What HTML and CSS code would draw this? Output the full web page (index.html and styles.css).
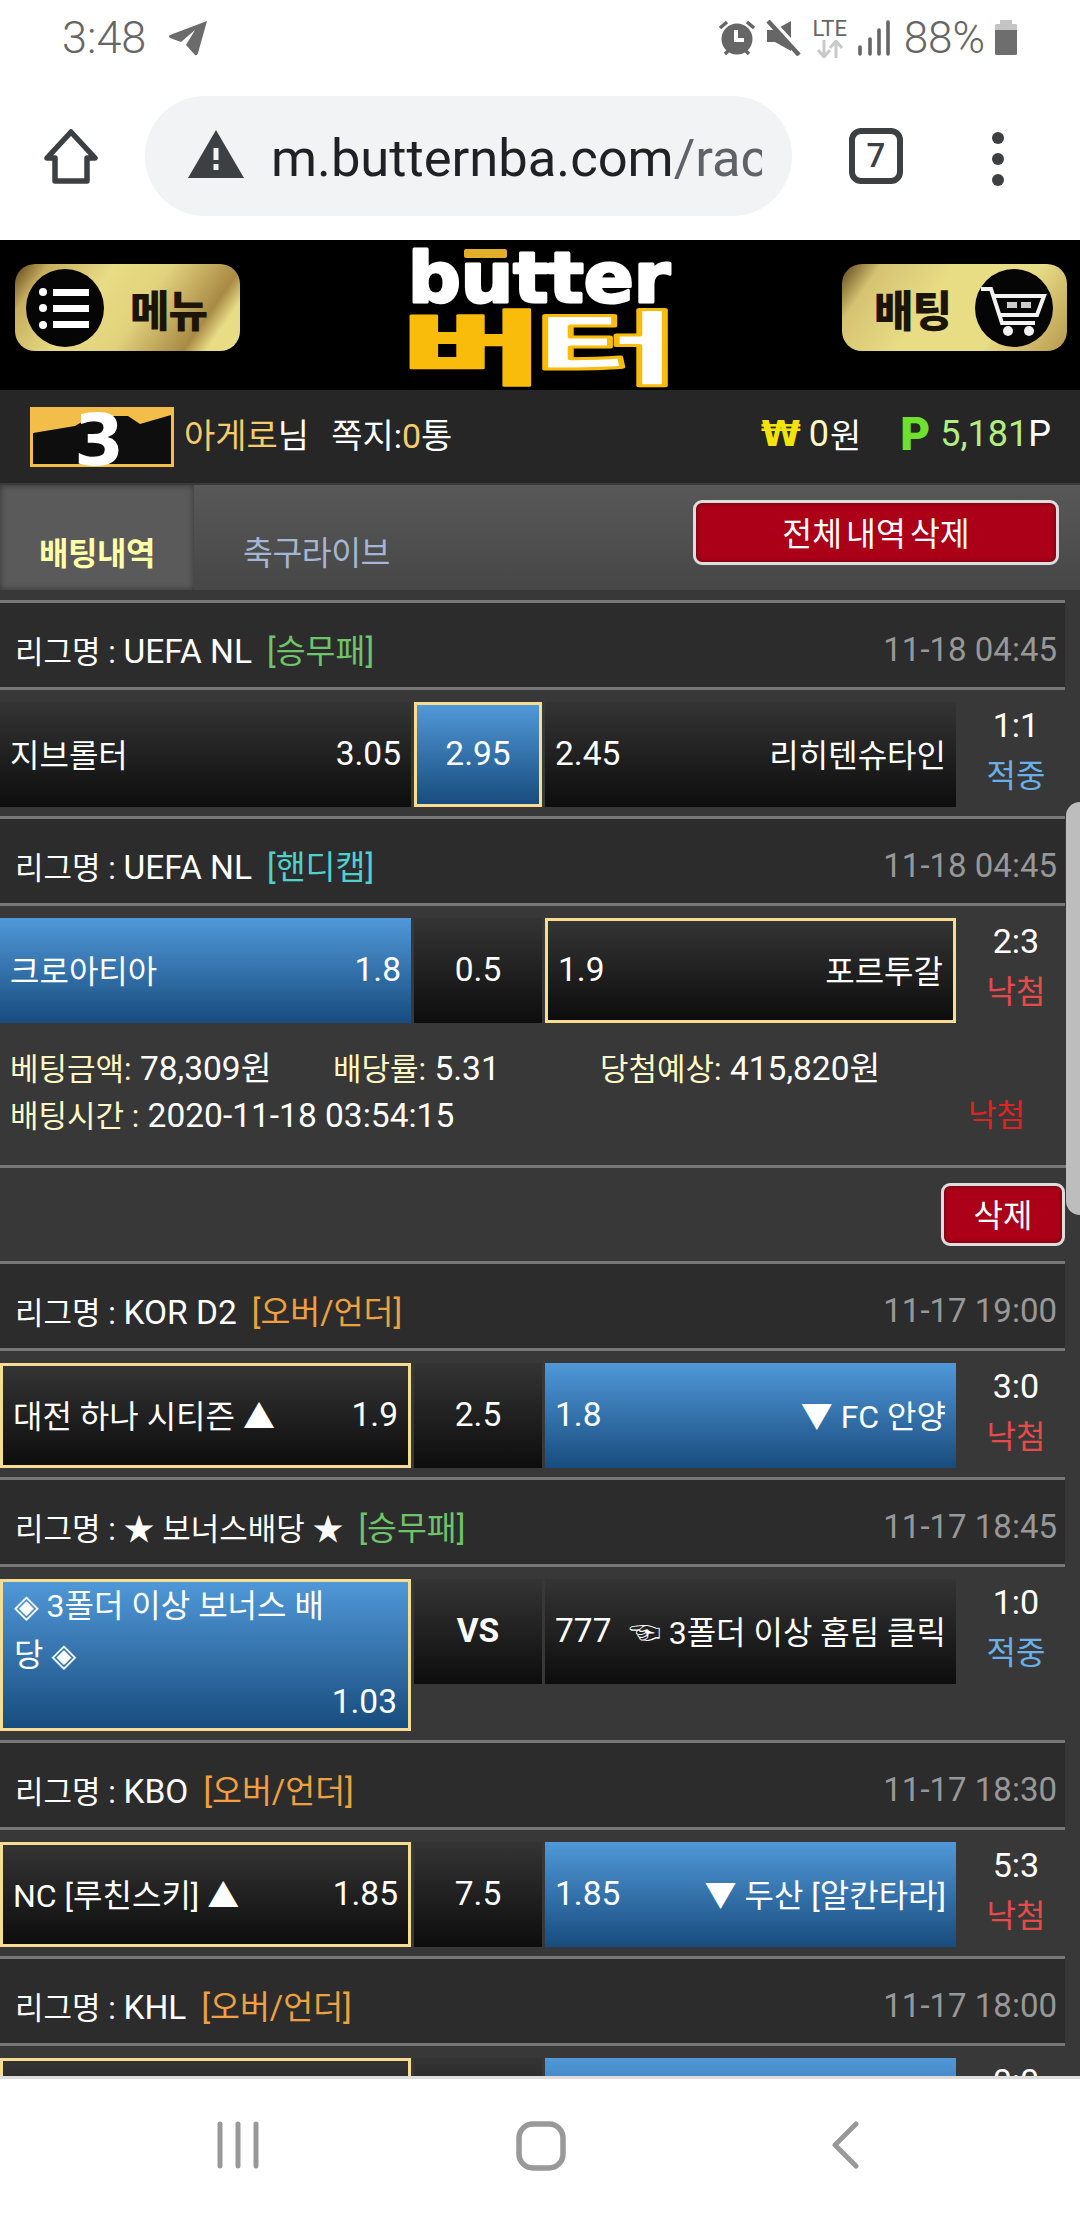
FILE: index.html
```html
<!DOCTYPE html>
<html lang="ko">
<head>
<meta charset="utf-8">
<title>butter</title>
<link rel="stylesheet" href="styles.css">
</head>
<body>
<div class="phone">
  <div class="statusbar">
    <div class="st-left">
      <span class="clock">3:48</span>
      <svg class="ic-send" width="40" height="36" viewBox="0 0 40 36"><path d="M39 1 L2 15 Q0 16 2 18 L13 22 L27 10 L18 25 L27 35 Q29 36 30 33 Z" fill="#6b6b6b"/></svg>
    </div>
    <div class="st-right">
      <svg width="40" height="38" viewBox="0 0 40 38"><circle cx="20" cy="20" r="15.500" fill="#666"/><path d="M19 11 V21 H27" fill="none" stroke="#fff" stroke-width="4"/><path d="M3 9 L10 3 M37 9 L30 3 M8 35 L12 31 M32 35 L28 31" stroke="#666" stroke-width="3.5"/></svg>
      <svg class="ic-mute" width="36" height="36" viewBox="0 0 36 36"><path d="M1 10 H9 L25 1 V31 L9 22 H1 Z" fill="#666"/><path d="M5 1 L35 33" stroke="#fff" stroke-width="6"/><path d="M2 1 L33 35" stroke="#666" stroke-width="4.500"/></svg>
      <div class="lte"><span class="lte-t">LTE</span><svg width="28" height="18" viewBox="0 0 28 18"><path d="M8 0 V16 M2 10 L8 17 L14 10" fill="none" stroke="#c9c9c9" stroke-width="3"/><path d="M20 18 V2 M14 8 L20 1 L26 8" fill="none" stroke="#c9c9c9" stroke-width="3"/></svg></div>
      <svg class="ic-sig" width="32" height="36" viewBox="0 0 32 36"><path d="M2 27 V34 M12 19 V34 M21 10 V34 M30 2 V34" stroke="#666" stroke-width="3.6" stroke-linecap="round"/></svg>
      <span class="batt">88%</span>
      <svg width="24" height="36" viewBox="0 0 24 36"><path d="M6 0 H18 V4 H6 Z M1 5 Q1 4 3 4 H21 Q23 4 23 5 V10 H1 Z" fill="#c4c4c4"/><path d="M1 10 H23 V34 Q23 35 21 35 H3 Q1 35 1 34 Z" fill="#6e6e6e"/></svg>
    </div>
  </div>

  <div class="urlbar">
    <svg class="ic-home" width="54" height="56" viewBox="0 0 54 56"><path d="M27 3 L51 29 H43 V52 H11 V29 H3 Z" fill="none" stroke="#3c4043" stroke-width="5.500" stroke-linejoin="round"/></svg>
    <div class="pill">
      <svg class="ic-warn" width="56" height="48" viewBox="0 0 56 48"><path d="M28 0 L56 48 H0 Z" fill="#3c4043"/><rect x="25.500" y="18" width="5" height="12" fill="#f1f3f4"/><rect x="25.500" y="34" width="5" height="6" fill="#f1f3f4"/></svg>
      <div class="url"><span class="url-host">m.butternba.com</span><span class="url-path">/race</span></div>
    </div>
    <div class="tabcount">7</div>
    <div class="kebab"><i></i><i></i><i></i></div>
  </div>

  <header class="sitehead">
    <div class="goldbtn goldbtn-l">
      <svg width="78" height="78" viewBox="0 0 78 78"><circle cx="39" cy="39" r="39" fill="#050505"/><g fill="#fff"><circle cx="17" cy="23" r="4"/><circle cx="17" cy="39" r="4"/><circle cx="17" cy="56" r="4"/><rect x="27" y="20" width="36" height="7"/><rect x="27" y="36" width="36" height="7"/><rect x="27" y="52" width="36" height="7"/></g></svg>
      <span class="goldtxt">메뉴</span>
    </div>
    <svg class="logo" width="262" height="136" viewBox="0 0 262 136">
      <rect class="logo-bar" x="55" y="0" width="43" height="9" rx="2"/>
      <text class="logo-en" x="-1" y="53" textLength="262" lengthAdjust="spacingAndGlyphs">butter</text>
      <text class="logo-ko" x="-8" y="128" textLength="142" lengthAdjust="spacingAndGlyphs">버</text>
      <text class="logo-ko logo-ko2" x="124" y="128" textLength="146" lengthAdjust="spacingAndGlyphs">터</text>
    </svg>
    <div class="goldbtn goldbtn-r">
      <span class="goldtxt">배팅</span>
      <svg width="78" height="78" viewBox="0 0 78 78"><circle cx="39" cy="39" r="39" fill="#050505"/><path d="M6 20 H16 L27 54 H60 M19 27 H69 L62 46 H25" fill="none" stroke="#f2f2f2" stroke-width="4"/><rect x="32" y="33" width="10" height="6" fill="#ccc"/><rect x="46" y="33" width="10" height="6" fill="#ccc"/><circle cx="33" cy="62" r="5" fill="#f2f2f2"/><circle cx="54" cy="62" r="5" fill="#f2f2f2"/></svg>
    </div>
  </header>

  <div class="userbar">
    <div class="user-l">
      <svg class="lvl" width="144" height="60" viewBox="0 0 144 60">
        <rect width="144" height="60" fill="#f3bd4a"/>
        <path d="M3 26 L45 19 L62 9 L98 9 L110 17 L141 8 V57 H3 Z" fill="#0e0e0e"/>
        <text class="lvl-n" x="69" y="58">3</text>
      </svg>
      <span class="gold name">아게로</span><span class="nim">님</span>
      <span class="msg">쪽지:<span class="gold">0</span>통</span>
    </div>
    <div class="user-r">
      <span class="won-ic">₩</span><span class="cream">0</span><span class="won">원</span>
      <span class="pt-ic">P</span><span class="lime">5,181</span><span>P</span>
    </div>
  </div>

  <div class="tabs">
    <div class="tab tab-on">배팅내역</div>
    <div class="tab tab-off">축구라이브</div>
    <button class="redbtn redbtn-all">전체 내역 삭제</button>
  </div>

  <main class="list">
    <div class="league"><div class="lg-l"><span>리그명 : <span class="lat">UEFA NL</span></span><span class="tag t-green">[승무패]</span></div><span class="date">11-18 04:45</span></div>
    <div class="bet">
      <div class="cell dark"><span>지브롤터</span><span class="num">3.05</span></div>
      <div class="cell mid blue sel">2.95</div>
      <div class="cell dark"><span class="num">2.45</span><span>리히텐슈타인</span></div>
      <div class="score">1:1<br><span class="hit">적중</span></div>
    </div>

    <div class="league"><div class="lg-l"><span>리그명 : <span class="lat">UEFA NL</span></span><span class="tag t-cyan">[핸디캡]</span></div><span class="date">11-18 04:45</span></div>
    <div class="bet bet-open">
      <div class="cell blue"><span>크로아티아</span><span class="num">1.8</span></div>
      <div class="cell mid dark">0.5</div>
      <div class="cell dark sel"><span class="num">1.9</span><span>포르투갈</span></div>
      <div class="score">2:3<br><span class="miss">낙첨</span></div>
    </div>
    <div class="detail">
      <div class="d-row">
        <span><span class="lbl">베팅금액:</span> 78,309원</span>
        <span><span class="lbl">배당률:</span> 5.31</span>
        <span><span class="lbl">당첨예상:</span> 415,820원</span>
      </div>
      <div class="d-row2">
        <span><span class="lbl">배팅시간 :</span> 2020-11-18 03:54:15</span>
        <span class="d-miss">낙첨</span>
      </div>
    </div>
    <div class="delrow"><button class="redbtn redbtn-one">삭제</button></div>

    <div class="league"><div class="lg-l"><span>리그명 : <span class="lat">KOR D2</span></span><span class="tag t-orange">[오버/언더]</span></div><span class="date">11-17 19:00</span></div>
    <div class="bet">
      <div class="cell dark sel"><span>대전 하나 시티즌 ▲</span><span class="num">1.9</span></div>
      <div class="cell mid dark">2.5</div>
      <div class="cell blue"><span class="num">1.8</span><span>▼ FC 안양</span></div>
      <div class="score">3:0<br><span class="miss">낙첨</span></div>
    </div>

    <div class="league"><div class="lg-l"><span>리그명 : ★ 보너스배당 ★</span><span class="tag t-green">[승무패]</span></div><span class="date">11-17 18:45</span></div>
    <div class="bet">
      <div class="cell blue sel cell-tall">
        <div class="tall-t">◈ 3폴더 이상 보너스 배당 ◈</div>
        <div class="tall-o">1.03</div>
      </div>
      <div class="cell mid dark vs">VS</div>
      <div class="cell dark"><span class="num">777</span><span>☜ 3폴더 이상 홈팀 클릭</span></div>
      <div class="score">1:0<br><span class="hit">적중</span></div>
    </div>

    <div class="league"><div class="lg-l"><span>리그명 : <span class="lat">KBO</span></span><span class="tag t-orange">[오버/언더]</span></div><span class="date">11-17 18:30</span></div>
    <div class="bet">
      <div class="cell dark sel"><span>NC [루친스키] ▲</span><span class="num">1.85</span></div>
      <div class="cell mid dark">7.5</div>
      <div class="cell blue"><span class="num">1.85</span><span>▼ 두산 [알칸타라]</span></div>
      <div class="score">5:3<br><span class="miss">낙첨</span></div>
    </div>

    <div class="league"><div class="lg-l"><span>리그명 : <span class="lat">KHL</span></span><span class="tag t-orange">[오버/언더]</span></div><span class="date">11-17 18:00</span></div>
    <div class="bet">
      <div class="cell dark sel"></div>
      <div class="cell mid dark"></div>
      <div class="cell blue"></div>
      <div class="score">0:0</div>
    </div>
    <div class="scrollthumb"></div>
  </main>

  <nav class="navbar">
    <svg width="44" height="48" viewBox="0 0 44 48"><path d="M4 3 V45 M22 3 V45 M40 3 V45" stroke="#999" stroke-width="5" stroke-linecap="round"/></svg>
    <svg width="50" height="50" viewBox="0 0 50 50"><rect x="3" y="3" width="44" height="44" rx="14" fill="none" stroke="#999" stroke-width="5.500"/></svg>
    <svg width="28" height="48" viewBox="0 0 28 48"><path d="M25 3 L4 24 L25 45" fill="none" stroke="#999" stroke-width="5" stroke-linecap="round" stroke-linejoin="round"/></svg>
  </nav>
</div>
</body>
</html>
```
FILE: styles.css
```css
* { box-sizing: border-box; }
html, body { margin: 0; padding: 0; }
body { font-family: Roboto, "Noto Sans CJK KR", "DejaVu Sans", sans-serif; background: #fff; }
.phone { width: 1080px; height: 2220px; display: flex; flex-direction: column; overflow: hidden; }

.statusbar { height: 80px; padding: 18px 62px 0 62px; display: flex; justify-content: space-between; align-items: flex-start; color: #666; flex: none; }
.st-left, .st-right { display: flex; align-items: center; height: 40px; }
.clock { font-size: 45px; font-weight: 300; line-height: 40px; }
.ic-send { margin-left: 22px; }
.ic-mute { margin-left: 9px; }
.lte { width: 38px; margin-left: 9px; display: flex; flex-direction: column; align-items: center; }
.lte-t { font-size: 22px; line-height: 20px; color: #666; }
.lte svg { display: block; margin-top: 1px; }
.ic-sig { margin-left: 9px; }
.batt { font-size: 44px; font-weight: 300; line-height: 40px; margin: 0 9px 0 14px; }

.urlbar { height: 160px; flex: none; display: flex; align-items: flex-start; padding-top: 16px; position: relative; }
.ic-home { margin: 33px 0 0 44px; }
.pill { width: 647px; height: 120px; margin-left: 47px; border-radius: 60px; background: #f1f3f4; display: flex; align-items: center; padding-left: 43px; }
.ic-warn { flex: none; margin-top: -4px; }
.url { width: 491px; margin-left: 27px; margin-top: 3px; overflow: hidden; white-space: nowrap; font-size: 52.5px; line-height: 64px; }
.url-host { color: #202124; }
.url-path { color: #5f6368; }
.tabcount { width: 54px; height: 56px; margin: 32px 0 0 57px; border: 6px solid #3c4043; border-radius: 12px; font-size: 33px; font-weight: 500; text-align: center; line-height: 43px; color: #3c4043; }
.kebab { margin: 36px 0 0 89px; display: flex; flex-direction: column; gap: 9px; }
.kebab i { display: block; width: 12px; height: 12px; border-radius: 50%; background: #3c4043; }

.sitehead { height: 150px; flex: none; background: #000; display: flex; align-items: flex-start; justify-content: space-between; padding: 24px 13px 0 15px; position: relative; }
.goldbtn { width: 225px; height: 87px; border-radius: 20px; display: flex; align-items: center; }
.goldbtn-l { background: linear-gradient(125deg, #5d4317 0, #c7ae60 12%, #e8dc85 35%, #e2d27d 55%, #a88a44 80%, #e8dc85 88%); padding-left: 11px; gap: 26px; }
.goldbtn-r { background: linear-gradient(125deg, #5d4317 0, #d6c372 14%, #e8dc85 40%, #e8dc85 70%, #b7994f 100%); padding-left: 32px; gap: 24px; }
.goldtxt { font-family: "Noto Sans CJK KR", sans-serif; font-size: 43px; font-weight: 900; color: #1a1508; letter-spacing: -1px; }
.logo { position: absolute; left: 409px; top: 9px; overflow: visible; }
.logo-bar { fill: #e0ae28; }
.logo-en { font-family: "DejaVu Sans", sans-serif; font-weight: 700; font-size: 70px; fill: #fff; stroke: #fff; stroke-width: 3px; stroke-linejoin: round; }
.logo-ko { font-family: "Noto Sans CJK KR", sans-serif; font-weight: 900; font-size: 80px; fill: #f9bc0a; stroke: #f9bc0a; stroke-width: 2px; stroke-linejoin: round; }
.logo-ko2 { fill: #fff; stroke-width: 3px; }

.userbar { height: 93px; flex: none; background: #262626; display: flex; justify-content: space-between; align-items: center; padding: 0 29px 0 30px; color: #fff; font-size: 34px; font-weight: 400; }
.user-l, .user-r { display: flex; align-items: center; }
.user-l > span { position: relative; top: -3px; }
.user-r { font-size: 36px; position: relative; top: -3px; }
.lvl { margin-right: 10px; flex: none; }
.lvl-n { font-family: "DejaVu Sans", sans-serif; font-weight: 700; font-size: 72px; fill: #fff; text-anchor: middle; }
.gold { color: #f5cc6c; }
.msg { margin-left: 22px; }
.won-ic { color: #f2e30c; font-family: "DejaVu Sans", sans-serif; font-weight: 700; font-size: 36px; margin-right: 8px; }
.cream { color: #fff7c2; }
.won { margin: 0 39px 0 1px; font-size: 34px; }
.pt-ic { color: #6fe02e; font-weight: 900; font-size: 46px; margin-right: 10px; }
.lime { color: #b4ee80; }

.tabs { height: 107px; flex: none; margin-top: 0; border-top: 2px solid #3a3a3a; background: linear-gradient(#585858, #474747); display: flex; position: relative; }
.tab { display: flex; align-items: flex-end; justify-content: center; padding-bottom: 16px; }
.tab-on { width: 194px; background: #5a5a5a; box-shadow: inset 0 0 6px #333; color: #ffffa6; font-weight: 700; font-size: 32px; letter-spacing: -0.500px; }
.tab-off { width: 240px; padding-left: 5px; color: #a3b6d2; font-size: 32.5px; letter-spacing: -0.500px; }
.redbtn { background: #ac0019; border: 3px solid #ddd; border-radius: 9px; color: #fff; font-family: inherit; font-size: 32.5px; padding: 0 0 3px; box-shadow: inset 0 0 5px #5d000c; }
.redbtn-all { position: absolute; left: 693px; top: 15px; width: 366px; height: 65px; word-spacing: -4px; }
.redbtn-one { width: 124px; height: 63px; font-size: 32px; }

.list { flex: 1; min-height: 0; background: #383838; overflow: hidden; padding: 10px 15px 0 0; position: relative; color: #fff; font-size: 31px; }
.league { height: 90px; border-top: 3px solid #777; border-bottom: 3px solid #777; background: #2c2c2c; display: flex; justify-content: space-between; align-items: center; padding: 7px 8px 0 15px; }
.lg-l { display: flex; gap: 15px; align-items: baseline; }
.lat { font-size: 33.5px; }
.tag { font-size: 32.5px; }
.date { color: #989898; font-size: 33px; position: relative; top: 1px; }
.t-green { color: #6ec46a; }
.t-cyan { color: #4ed1cf; }
.t-orange { color: #efa040; }
.bet { display: grid; grid-template-columns: 411px 128px 411px 1fr; column-gap: 3px; align-items: start; padding: 12px 0 9px; }
.bet-open { padding-bottom: 0; }
.cell { height: 105px; display: flex; justify-content: space-between; align-items: center; padding: 0 10px 3px; font-size: 32px; white-space: nowrap; }
.num { font-size: 33.5px; }
.dark { background: linear-gradient(#343434, #0d0d0d); }
.blue { background: linear-gradient(#5098d8, #184c7e); }
.sel { border: 3px solid #f8dc92; padding: 0 10px 3px; }
.mid { justify-content: center; padding: 0 0 3px; font-size: 33.5px; }
.vs { font-weight: 700; }
.cell-tall { height: 152px; display: block; padding: 0 11px; }
.tall-t { width: 330px; white-space: normal; line-height: 49px; height: 98px; }
.tall-o { text-align: right; line-height: 44px; font-size: 33.5px; }
.score { margin-top: -2px; padding-left: 8px; text-align: center; font-size: 34px; line-height: 50px; }
.hit { color: #69b0ea; font-size: 32px; }
.miss { color: #e64a4a; font-size: 32px; }

.detail { margin-right: -15px; height: 145px; padding: 23px 0 0 10px; border-bottom: 3px solid #777; font-size: 33.5px; line-height: 46px; }
.d-row { display: grid; grid-template-columns: 323px 267px 1fr; }
.d-row2 { display: flex; justify-content: space-between; padding-right: 55px; }
.lbl { color: #fff8c4; font-size: 31px; }
.d-miss { color: #e02222; font-size: 31px; }
.delrow { height: 93px; display: flex; justify-content: flex-end; align-items: flex-start; padding-top: 15px; }

.scrollthumb { position: absolute; right: 0; top: 212px; width: 14px; height: 413px; background: #bdbdbd; border-radius: 14px 0 0 14px; }

.navbar { height: 144px; flex: none; background: #fff; border-top: 3px solid #ddd; position: relative; display: flex; align-items: flex-start; padding: 42px 0 0 216px; gap: 0; }
.navbar svg:nth-child(2) { margin-left: 256px; }
.navbar svg:nth-child(3) { margin-left: 265px; }
```
